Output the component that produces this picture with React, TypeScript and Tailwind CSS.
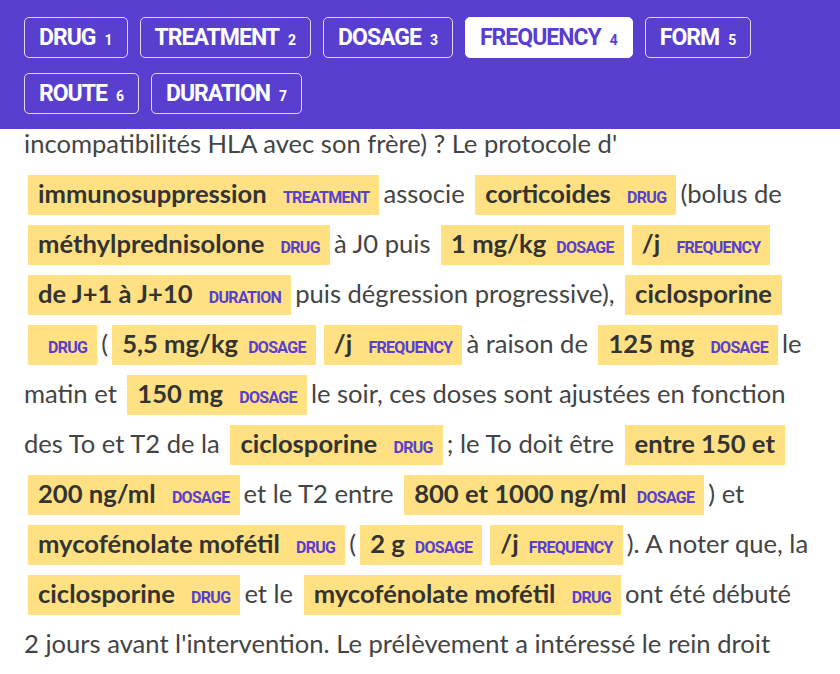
import React from "react";

type Token = { t: string; label?: string };

const LABELS = [
  { name: "DRUG", key: 1 },
  { name: "TREATMENT", key: 2 },
  { name: "DOSAGE", key: 3 },
  { name: "FREQUENCY", key: 4 },
  { name: "FORM", key: 5 },
  { name: "ROUTE", key: 6 },
  { name: "DURATION", key: 7 },
];

const ACTIVE = "FREQUENCY";

const tokens: Token[] = [
  { t: "incompatibilités HLA avec son frère) ? Le protocole d' " },
  { t: "immunosuppression ", label: "TREATMENT" },
  { t: "associe " },
  { t: "corticoides ", label: "DRUG" },
  { t: "(bolus de " },
  { t: "méthylprednisolone ", label: "DRUG" },
  { t: "à J0 puis " },
  { t: "1 mg/kg", label: "DOSAGE" },
  { t: "/j ", label: "FREQUENCY" },
  { t: "de J+1 à J+10 ", label: "DURATION" },
  { t: "puis dégression progressive), " },
  { t: "ciclosporine ", label: "DRUG" },
  { t: "(" },
  { t: "5,5 mg/kg", label: "DOSAGE" },
  { t: "/j ", label: "FREQUENCY" },
  { t: "à raison de " },
  { t: "125 mg ", label: "DOSAGE" },
  { t: "le matin et " },
  { t: "150 mg ", label: "DOSAGE" },
  { t: "le soir, ces doses sont ajustées en fonction des To et T2 de la " },
  { t: "ciclosporine ", label: "DRUG" },
  { t: "; le To doit être " },
  { t: "entre 150 et 200 ng/ml ", label: "DOSAGE" },
  { t: "et le T2 entre " },
  { t: "800 et 1000 ng/ml", label: "DOSAGE" },
  { t: ") et " },
  { t: "mycofénolate mofétil ", label: "DRUG" },
  { t: "(" },
  { t: "2 g", label: "DOSAGE" },
  { t: "/j", label: "FREQUENCY" },
  { t: "). A noter que, la " },
  { t: "ciclosporine ", label: "DRUG" },
  { t: "et le " },
  { t: "mycofénolate mofétil ", label: "DRUG" },
  { t: "ont été débuté 2\u00a0jours avant l'intervention. Le prélèvement a intéressé le rein droit " },
];

function LabelButton({ name, num, active }: { name: string; num: number; active: boolean }) {
  return (
    <div
      className={`flex h-[41px] items-center rounded-[5px] border px-[14px] ${
        active ? "border-white bg-white text-[#583fcf]" : "border-white/80 text-white"
      }`}
    >
      <div className="flex items-baseline font-[Roboto,sans-serif] font-bold">
        <span className="text-[23px] leading-none tracking-[-1px]">{name}</span>
        <span className="ml-[9px] text-[14px] leading-none">{num}</span>
      </div>
    </div>
  );
}

function Mark({ text, label }: { text: string; label: string }) {
  return (
    <mark className="mx-[4px] bg-[#ffe184] pb-[7px] pl-[10px] pr-[10px] pt-[3px] font-bold text-[#333] box-decoration-clone">
      {text}
      <span className="ml-[10px] font-[Roboto,sans-serif] text-[16px] font-bold leading-none tracking-[-0.7px] text-[#583fcf]">
        {label}
      </span>
    </mark>
  );
}

export default function App() {
  return (
    <div className="flex h-[674px] flex-col overflow-hidden bg-white">
      <div className="flex flex-wrap gap-x-[12px] gap-y-[15px] bg-[#583fcf] px-[24px] pb-[15px] pt-[17px]">
        {LABELS.map((l) => (
          <LabelButton key={l.name} name={l.name} num={l.key} active={l.name === ACTIVE} />
        ))}
      </div>
      <div className="flex-1 overflow-hidden">
        <p className="-mt-[11px] pl-[24px] pr-[31px] font-[Lato,sans-serif] text-[25.6px] leading-[50px] text-[#444]">
          {tokens.map((tok, i) => (
            <React.Fragment key={i}>
              {i > 0 && <wbr />}
              {tok.label ? <Mark text={tok.t} label={tok.label} /> : <span>{tok.t}</span>}
            </React.Fragment>
          ))}
        </p>
      </div>
    </div>
  );
}
